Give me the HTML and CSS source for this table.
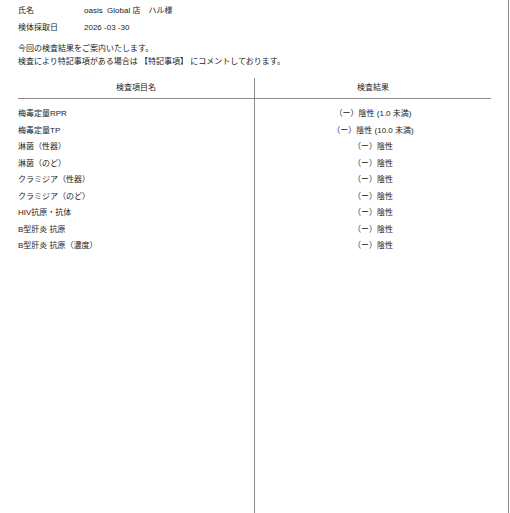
FILE: index.html
```html
<!DOCTYPE html>
<html lang="ja">
<head>
<meta charset="utf-8">
<link rel="stylesheet" href="styles.css">
</head>
<body>
<div class="page">
  <div class="info">
    <div class="info-row"><span class="label">氏名</span><span class="value">oasis&nbsp; Global 店　ハル様</span></div>
    <div class="info-row"><span class="label">検体採取日</span><span class="value">2026 -03 -30</span></div>
  </div>
  <p class="note">今回の検査結果をご案内いたします。<br>検査により特記事項がある場合は 【特記事項】 にコメントしております。</p>
  <div class="table">
    <div class="col col-left">
      <div class="head">検査項目名</div>
      <div class="rows">
        <div class="cell">梅毒定量RPR</div>
        <div class="cell">梅毒定量TP</div>
        <div class="cell">淋菌（性器）</div>
        <div class="cell">淋菌（のど）</div>
        <div class="cell">クラミジア（性器）</div>
        <div class="cell">クラミジア（のど）</div>
        <div class="cell">HIV抗原・抗体</div>
        <div class="cell">B型肝炎 抗原</div>
        <div class="cell">B型肝炎 抗原（濃度）</div>
      </div>
    </div>
    <div class="col col-right">
      <div class="head">検査結果</div>
      <div class="rows">
        <div class="cell">（ー）陰性 (1.0 未満)</div>
        <div class="cell">（ー）陰性 (10.0 未満)</div>
        <div class="cell">（ー）陰性</div>
        <div class="cell">（ー）陰性</div>
        <div class="cell">（ー）陰性</div>
        <div class="cell">（ー）陰性</div>
        <div class="cell">（ー）陰性</div>
        <div class="cell">（ー）陰性</div>
        <div class="cell">（ー）陰性</div>
      </div>
    </div>
  </div>
</div>
</body>
</html>
```
FILE: styles.css
```css
html, body {
  margin: 0;
  padding: 0;
  background: #fff;
}
body {
  font-family: "Liberation Sans", "Noto Sans CJK JP", sans-serif;
  font-size: 8px;
  color: #222;
  overflow: hidden;
}
.page {
  width: 509px;
  height: 513px;
  border-right: 1px solid #8a8a8a;
  padding-left: 18px;
  box-sizing: border-box;
  overflow: hidden;
}
.info {
  padding-top: 2px;
}
.info-row {
  display: flex;
  height: 17px;
  line-height: 17px;
}
.label {
  width: 66px;
}
.note {
  margin: 6px 0 0 0;
  line-height: 13px;
}
.table {
  display: flex;
  width: 473px;
  margin-top: 10px;
  height: 500px;
}
.col-left {
  width: 236px;
  border-right: 1px solid #8a8a8a;
}
.col-right {
  width: 236px;
}
.head {
  height: 20px;
  line-height: 20px;
  text-align: center;
  border-bottom: 1px solid #8a8a8a;
}
.rows {
  padding-top: 7px;
}
.cell {
  height: 16.5px;
  line-height: 16.5px;
}
.col-right .cell {
  text-align: center;
}
```
